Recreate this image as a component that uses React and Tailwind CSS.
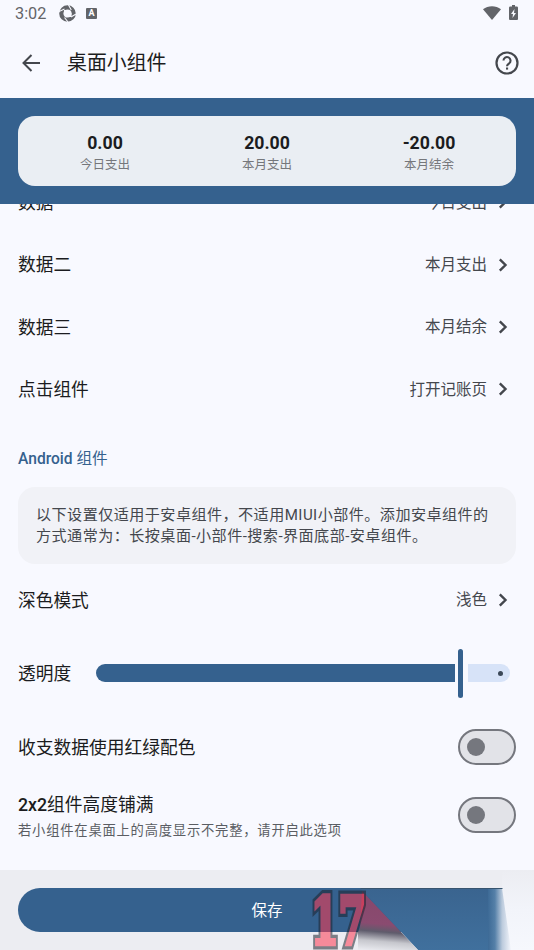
const stats = [
  { value: "0.00", label: "今日支出" },
  { value: "20.00", label: "本月支出" },
  { value: "-20.00", label: "本月结余" },
]

const dataRows = [
  { label: "数据一", value: "今日支出" },
  { label: "数据二", value: "本月支出" },
  { label: "数据三", value: "本月结余" },
  { label: "点击组件", value: "打开记账页" },
]

function StatusBar() {
  return (
    <div className="h-7 shrink-0 flex items-center justify-between px-[15px] text-[#646569]">
      <div className="flex items-center">
        <span className="w-[44px] text-[16.3px] leading-7">3:02</span>
        <svg width="17" height="17" viewBox="0 0 17 17" className="block mb-px">
          <circle cx="8.5" cy="8.5" r="6.2" fill="none" stroke="#626469" strokeWidth="4.2" />
          <path d="M0 6.500 5.500 4M9.500 0 12.300 5M17 9l-5 3M9 17l-3.500-4.500" stroke="#f8f9ff" strokeWidth="1.100" />
          <path d="M5 5h4l3.500 3v4h-4L5 9z" fill="#f8f9ff" />
        </svg>
        <span className="ml-[10px] mb-px w-[11px] h-[11px] rounded-[1px] bg-[#626469] text-white text-[9px] font-bold leading-[11px] text-center">
          A
        </span>
      </div>
      <div className="flex items-center gap-[8px] pb-[3px] pr-px">
        <svg width="18" height="14" viewBox="0 0 18 14" className="block">
          <path d="M0 3.200C5.200-.9 12.800-.9 18 3.200L9 14z" fill="#626469" />
        </svg>
        <svg width="9" height="15" viewBox="0 0 9 15" className="block">
          <path d="M3 0h3v1.500h1.800q1.200 0 1.200 1.200V14q0 1-1 1H1q-1 0-1-1V2.700q0-1.200 1.200-1.200H3z" fill="#626469" />
          <path d="M5.500 4 2 9h2l-.5 4L7 8H5z" fill="#f8f9ff" />
        </svg>
      </div>
    </div>
  )
}

function Chevron() {
  return (
    <svg width="10" height="14" viewBox="0 0 10 14" className="block ml-[11px] mb-[2px]">
      <path d="M1.800 1.300 7.500 7l-5.700 5.700" fill="none" stroke="#44474d" strokeWidth="2.400" />
    </svg>
  )
}

function Row({ label, value, height }) {
  return (
    <div className={`${height} shrink-0 flex items-center justify-between pt-[2px] pl-[18px] pr-[26px]`}>
      <span className="text-[17.7px] text-[#1b1c20]">{label}</span>
      <div className="flex items-center">
        <span className="text-[15.5px] text-[#44474d]">{value}</span>
        <Chevron />
      </div>
    </div>
  )
}

function Toggle() {
  return (
    <div className="w-[58px] h-[36px] shrink-0 rounded-full border-2 border-[#75777e] bg-[#e2e3e8] flex items-center pl-[7px]">
      <div className="w-[18px] h-[18px] rounded-full bg-[#75777e]" />
    </div>
  )
}

// Translucent stamp lying over the corner of the save bar
function Watermark() {
  return (
    <svg width="234" height="80" viewBox="300 870 234 80" className="absolute right-0 top-0 pointer-events-none">
      <defs>
        <linearGradient id="glow" x1="0" y1="0" x2="0" y2="1">
          <stop offset="0" stopColor="#ecedf2" />
          <stop offset="0.5" stopColor="#f2f4fa" />
          <stop offset="1" stopColor="#f6f8fd" />
        </linearGradient>
        <linearGradient id="flap" x1="0" y1="0" x2="0" y2="1">
          <stop offset="0" stopColor="#3a648f" />
          <stop offset="1" stopColor="#40709d" />
        </linearGradient>
        <linearGradient id="fold" gradientUnits="userSpaceOnUse" x1="372" y1="890" x2="367" y2="950">
          <stop offset="0" stopColor="#87476b" />
          <stop offset="0.55" stopColor="#8a4b70" />
          <stop offset="0.68" stopColor="#5f5c6c" />
          <stop offset="0.84" stopColor="#c6c7cd" />
          <stop offset="1" stopColor="#e9eaef" />
        </linearGradient>
        <linearGradient id="edge" gradientUnits="userSpaceOnUse" x1="488" y1="0" x2="511" y2="0">
          <stop offset="0" stopColor="#3d6a96" />
          <stop offset="0.3" stopColor="#5580a8" />
          <stop offset="0.62" stopColor="#bccbdd" />
          <stop offset="1" stopColor="#f3f5fb" />
        </linearGradient>
      </defs>
      <path d="M502 870h32v80h-32z" fill="url(#glow)" />
      <path d="M360 888h129v62h-71z" fill="url(#flap)" />
      <path d="M488 888h14l9 62h-23z" fill="url(#edge)" />
      <path d="M360 888h142l1 1H361z" fill="#37546f" />
      <path d="M362 891 418 950H358V932l2-4z" fill="url(#fold)" />
      <g
        opacity="0.54"
        fontFamily="'DejaVu Serif', serif"
        fontSize="66"
        fontWeight="700"
        strokeLinejoin="miter"
      >
        <text x="311" y="944" textLength="55" lengthAdjust="spacingAndGlyphs" fill="#1c222c" stroke="#1c222c" strokeWidth="11">
          17
        </text>
        <text x="311" y="944" textLength="55" lengthAdjust="spacingAndGlyphs" fill="#ff3850" stroke="#ff3850" strokeWidth="4.500" aria-hidden="true">
          17
        </text>
      </g>
    </svg>
  )
}

export default function App() {
  return (
    <div className="w-[534px] h-[950px] flex flex-col overflow-hidden bg-[#f8f9ff] font-[Roboto,'Noto_Sans_CJK_SC',sans-serif] whitespace-nowrap">
      <StatusBar />

      {/* Title bar */}
      <header className="h-[70px] shrink-0 flex items-center pl-[22px] pr-[15px] pb-px">
        <svg width="19" height="18" viewBox="0 0 19 18" className="block">
          <path d="M18 9H2M9.500 1 1.500 9l8 8" fill="none" stroke="#44474d" strokeWidth="2" />
        </svg>
        <h1 className="ml-[26px] pt-[2px] text-[19.9px] text-[#1b1c20] flex-1">桌面小组件</h1>
        <svg width="24" height="24" viewBox="0 0 24 24" className="block">
          <circle cx="12" cy="12" r="10.500" fill="none" stroke="#44474d" strokeWidth="2.200" />
          <path d="M8.500 9.600a3.500 3.500 0 1 1 5.700 2.700c-1.300 1-2.200 1.500-2.200 3" fill="none" stroke="#44474d" strokeWidth="2.100" />
          <path d="M11 16.500h2.100v2.100H11z" fill="#44474d" />
        </svg>
      </header>

      {/* Widget preview */}
      <section className="h-[106px] shrink-0 bg-[#35618e] p-[18px]">
        <div className="h-[70px] rounded-[17px] bg-[#eaeef3] grid grid-cols-3 px-[6px] pt-[16px]">
          {stats.map((s) => (
            <div key={s.label} className="flex flex-col items-center">
              <span className="text-[17.7px] leading-[22px] font-bold text-[#1b1c20]">{s.value}</span>
              <span className="text-[12.5px] leading-[22px] text-[#75777b]">{s.label}</span>
            </div>
          ))}
        </div>
      </section>

      {/* Settings list, scrolled a little under the preview */}
      <main className="h-[666px] shrink-0 overflow-hidden">
        <div className="-mt-[33px] flex flex-col">
          {dataRows.map((r) => (
            <Row key={r.label} label={r.label} value={r.value} height="h-[62.4px]" />
          ))}

          <h2 className="h-[66px] shrink-0 pl-[18px] pt-[26px] text-[15.6px] leading-6 font-medium text-[#35618e]">
            Android <span className="font-normal">组件</span>
          </h2>

          <div className="h-[77px] shrink-0 mx-[18px] px-[18px] pt-[18px] rounded-[17px] bg-[#f1f2f7] text-[15.1px] tracking-[0.45px] leading-[21.5px] text-[#44474d]">
            <p>以下设置仅适用于安卓组件，不适用MIUI小部件。添加安卓组件的</p>
            <p>方式通常为：长按桌面-小部件-搜索-界面底部-安卓组件。</p>
          </div>

          <Row label="深色模式" value="浅色" height="h-[73px]" />

          <div className="h-[73px] shrink-0 flex items-center pl-[18px] pr-[24px]">
            <span className="w-[78px] pt-[2px] text-[17.7px] text-[#1b1c20]">透明度</span>
            <div className="flex-1 flex items-center">
              <div className="w-[359px] h-[18px] rounded-l-full rounded-r-[2px] bg-[#35618e]" />
              <div className="ml-[3px] w-[5px] h-[49px] rounded-full bg-[#35618e]" />
              <div className="ml-[5px] flex-1 h-[18px] rounded-r-full rounded-l-[2px] bg-[#d7e3f8] flex items-center justify-end pr-[7px]">
                <div className="w-[5px] h-[5px] rounded-full bg-[#3b4858]" />
              </div>
            </div>
          </div>

          <div className="h-[74px] shrink-0 flex items-center justify-between px-[18px]">
            <span className="pt-[3px] text-[17.75px] text-[#1b1c20]">收支数据使用红绿配色</span>
            <Toggle />
          </div>

          <div className="h-[62px] shrink-0 flex items-center justify-between px-[18px]">
            <div className="pt-[5px]">
              <p className="text-[17.75px] leading-[26px] text-[#1b1c20]">
                <span className="font-medium">2x2</span>组件高度铺满
              </p>
              <p className="text-[13.3px] leading-[25px] tracking-[0.78px] text-[#5a5d63]">
                若小组件在桌面上的高度显示不完整，请开启此选项
              </p>
            </div>
            <Toggle />
          </div>
        </div>
      </main>

      {/* Save bar */}
      <footer className="relative h-[80px] shrink-0 bg-[#ecedf2] px-[18px] pt-[18px]">
        <button className="block w-full h-[44px] pt-[3px] rounded-full bg-[#35618e] text-white text-[15.5px]">保存</button>
        <Watermark />
      </footer>
    </div>
  )
}
